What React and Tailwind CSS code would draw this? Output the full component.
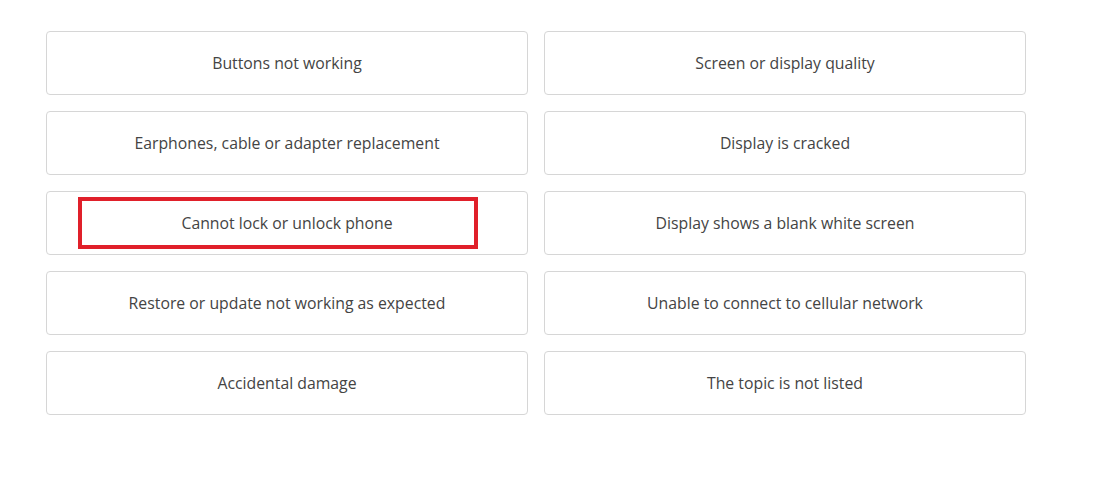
const topics = [
  "Buttons not working",
  "Screen or display quality",
  "Earphones, cable or adapter replacement",
  "Display is cracked",
  "Cannot lock or unlock phone",
  "Display shows a blank white screen",
  "Restore or update not working as expected",
  "Unable to connect to cellular network",
  "Accidental damage",
  "The topic is not listed",
];

export default function App() {
  return (
    <div className="min-h-screen bg-white pl-[46px] pt-[31px]" style={{ fontFamily: '"Open Sans", "Noto Sans", sans-serif' }}>
      <div className="grid w-[980px] grid-cols-2 gap-x-4 gap-y-4">
        {topics.map((t, i) => (
          <div
            key={t}
            className="relative flex h-16 items-center justify-center rounded border border-[#d6d6d6] bg-white pt-[2px] text-[15.8px] text-[#444]"
          >
            {t}
            {i === 4 && (
              <div className="pointer-events-none absolute left-[31px] top-[5px] h-[52px] w-[400px] border-4 border-[#e0202a]" />
            )}
          </div>
        ))}
      </div>
    </div>
  );
}
